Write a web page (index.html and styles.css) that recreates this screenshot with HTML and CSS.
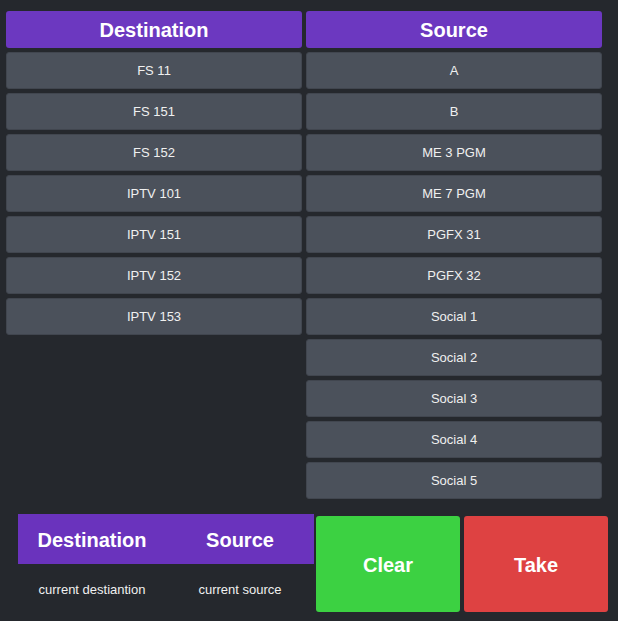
FILE: index.html
```html
<!DOCTYPE html>
<html lang="en">
<head>
<meta charset="utf-8">
<title>Router</title>
<link rel="stylesheet" href="styles.css">
</head>
<body>
<div class="lists">
  <div class="col">
    <div class="head">Destination</div>
    <div class="item">FS 11</div>
    <div class="item">FS 151</div>
    <div class="item">FS 152</div>
    <div class="item">IPTV 101</div>
    <div class="item">IPTV 151</div>
    <div class="item">IPTV 152</div>
    <div class="item">IPTV 153</div>
  </div>
  <div class="col">
    <div class="head">Source</div>
    <div class="item">A</div>
    <div class="item">B</div>
    <div class="item">ME 3 PGM</div>
    <div class="item">ME 7 PGM</div>
    <div class="item">PGFX 31</div>
    <div class="item">PGFX 32</div>
    <div class="item">Social 1</div>
    <div class="item">Social 2</div>
    <div class="item">Social 3</div>
    <div class="item">Social 4</div>
    <div class="item">Social 5</div>
  </div>
</div>
<div class="bottom">
  <div class="status">
    <div class="status-head">
      <div class="cell">Destination</div>
      <div class="cell">Source</div>
    </div>
    <div class="status-body">
      <div class="cell">current destiantion</div>
      <div class="cell">current source</div>
    </div>
  </div>
  <div class="btn clear">Clear</div>
  <div class="btn take">Take</div>
</div>
</body>
</html>
```
FILE: styles.css
```css
html, body {
  margin: 0;
  padding: 0;
  background: #25282d;
  font-family: "Liberation Sans", Arial, sans-serif;
  color: #f2f2f2;
}
body {
  width: 618px;
  height: 621px;
  overflow: hidden;
}
.lists {
  display: grid;
  grid-template-columns: 296px 296px;
  column-gap: 4px;
  padding: 11px 16px 0 6px;
  align-items: start;
}
.col {
  display: flex;
  flex-direction: column;
  gap: 4px;
}
.head {
  box-sizing: border-box;
  height: 37px;
  padding-top: 2px;
  background: #6c38c0;
  border-radius: 3px;
  display: flex;
  align-items: center;
  justify-content: center;
  font-weight: bold;
  font-size: 20px;
  color: #ffffff;
}
.item {
  box-sizing: border-box;
  height: 37px;
  background: #4b515b;
  border: 1px solid #41464f;
  border-radius: 3px;
  display: flex;
  align-items: center;
  justify-content: center;
  font-size: 13px;
  color: #f0f0f0;
}
.bottom {
  display: flex;
  margin-top: 15px;
  padding-left: 18px;
}
.status {
  width: 296px;
}
.status-head {
  box-sizing: border-box;
  display: flex;
  height: 50px;
  padding-top: 2px;
  background: #6a33bd;
  align-items: center;
  font-weight: bold;
  font-size: 20px;
  color: #ffffff;
}
.status-body {
  display: flex;
  padding-top: 18px;
  font-size: 13px;
  color: #f0f0f0;
}
.cell {
  flex: 1;
  text-align: center;
}
.btn {
  box-sizing: border-box;
  width: 144px;
  height: 96px;
  padding-top: 2px;
  margin-top: 2px;
  border-radius: 3px;
  display: flex;
  align-items: center;
  justify-content: center;
  font-weight: bold;
  font-size: 20px;
  color: #ffffff;
}
.clear {
  margin-left: 2px;
  background: #3cd142;
}
.take {
  margin-left: 4px;
  background: #de4242;
}
```
